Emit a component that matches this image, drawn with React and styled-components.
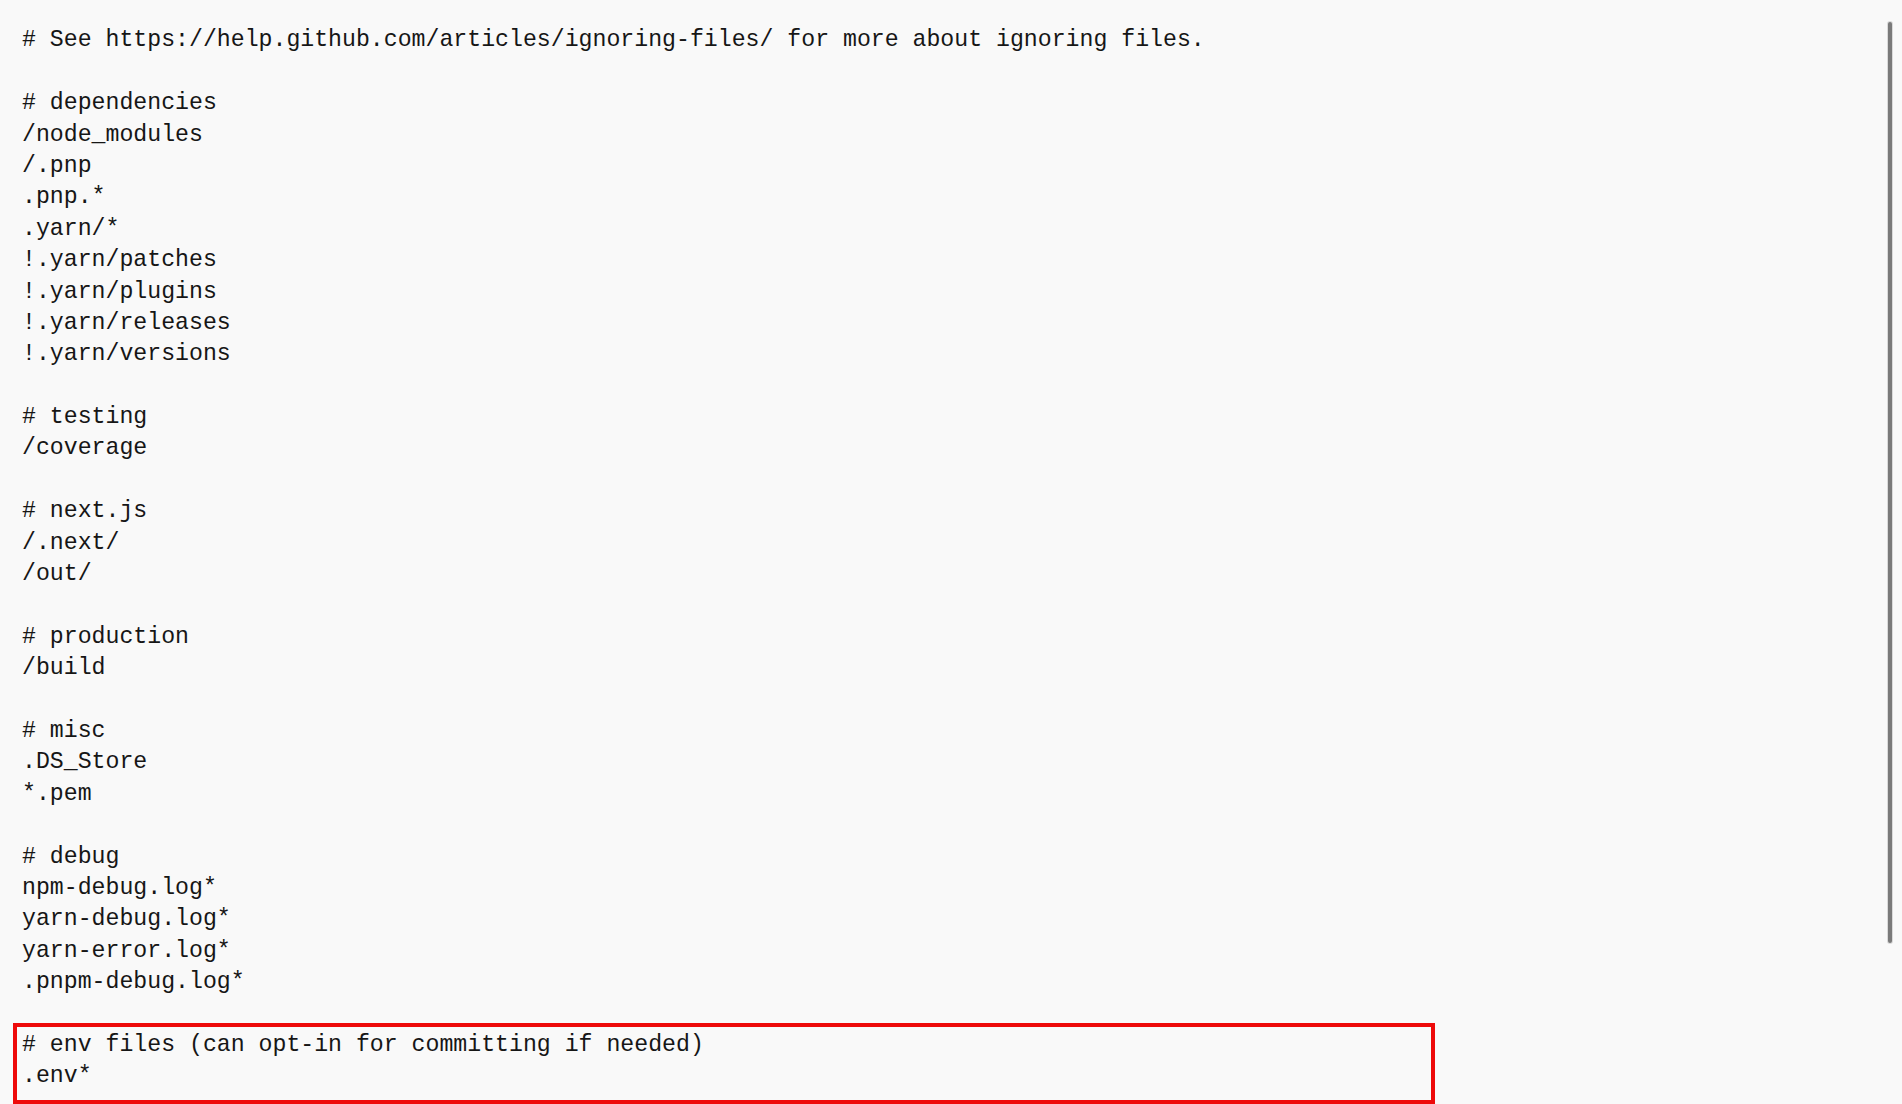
import React from "react";
import styled, { createGlobalStyle } from "styled-components";

const GlobalStyle = createGlobalStyle`
  html, body {
    margin: 0;
    padding: 0;
    background: #f9f9f9;
  }
  body {
    width: 1902px;
    height: 1104px;
    overflow: hidden;
  }
`;

const Window = styled.div`
  display: flex;
  width: 1902px;
  height: 1104px;
  background: #f9f9f9;
  overflow: hidden;
`;

const Editor = styled.div`
  flex: 1;
  padding: 25.4px 0 0 22px;
  font-family: "Liberation Mono", "DejaVu Sans Mono", monospace;
  font-size: 23.2px;
  color: #161616;
`;

const Line = styled.div`
  height: 31.4px;
  line-height: 31.4px;
  white-space: pre;
`;

const Highlight = styled.div`
  box-sizing: border-box;
  width: 1422px;
  margin: -7.2px 0 0 -9px;
  padding: 3.2px 0 7px 5px;
  border: 4px solid #ee0a0a;
`;

const ScrollTrack = styled.div`
  width: 10px;
  padding: 22px 6px 0 0;
  display: flex;
  flex-direction: column;
`;

const ScrollThumb = styled.div`
  width: 4px;
  height: 921px;
  margin-left: 2px;
  border-radius: 2px;
  background: #7a7a7a;
  box-shadow: 0 0 0 1px rgba(160, 160, 160, 0.35);
`;

const lines = [
  "# See https://help.github.com/articles/ignoring-files/ for more about ignoring files.",
  "",
  "# dependencies",
  "/node_modules",
  "/.pnp",
  ".pnp.*",
  ".yarn/*",
  "!.yarn/patches",
  "!.yarn/plugins",
  "!.yarn/releases",
  "!.yarn/versions",
  "",
  "# testing",
  "/coverage",
  "",
  "# next.js",
  "/.next/",
  "/out/",
  "",
  "# production",
  "/build",
  "",
  "# misc",
  ".DS_Store",
  "*.pem",
  "",
  "# debug",
  "npm-debug.log*",
  "yarn-debug.log*",
  "yarn-error.log*",
  ".pnpm-debug.log*",
  "",
];

const highlighted = [
  "# env files (can opt-in for committing if needed)",
  ".env*",
];

export default function App() {
  return (
    <>
      <GlobalStyle />
      <Window>
        <Editor>
          {lines.map((l, i) => (
            <Line key={i}>{l}</Line>
          ))}
          <Highlight>
            {highlighted.map((l, i) => (
              <Line key={i}>{l}</Line>
            ))}
          </Highlight>
        </Editor>
        <ScrollTrack>
          <ScrollThumb />
        </ScrollTrack>
      </Window>
    </>
  );
}
